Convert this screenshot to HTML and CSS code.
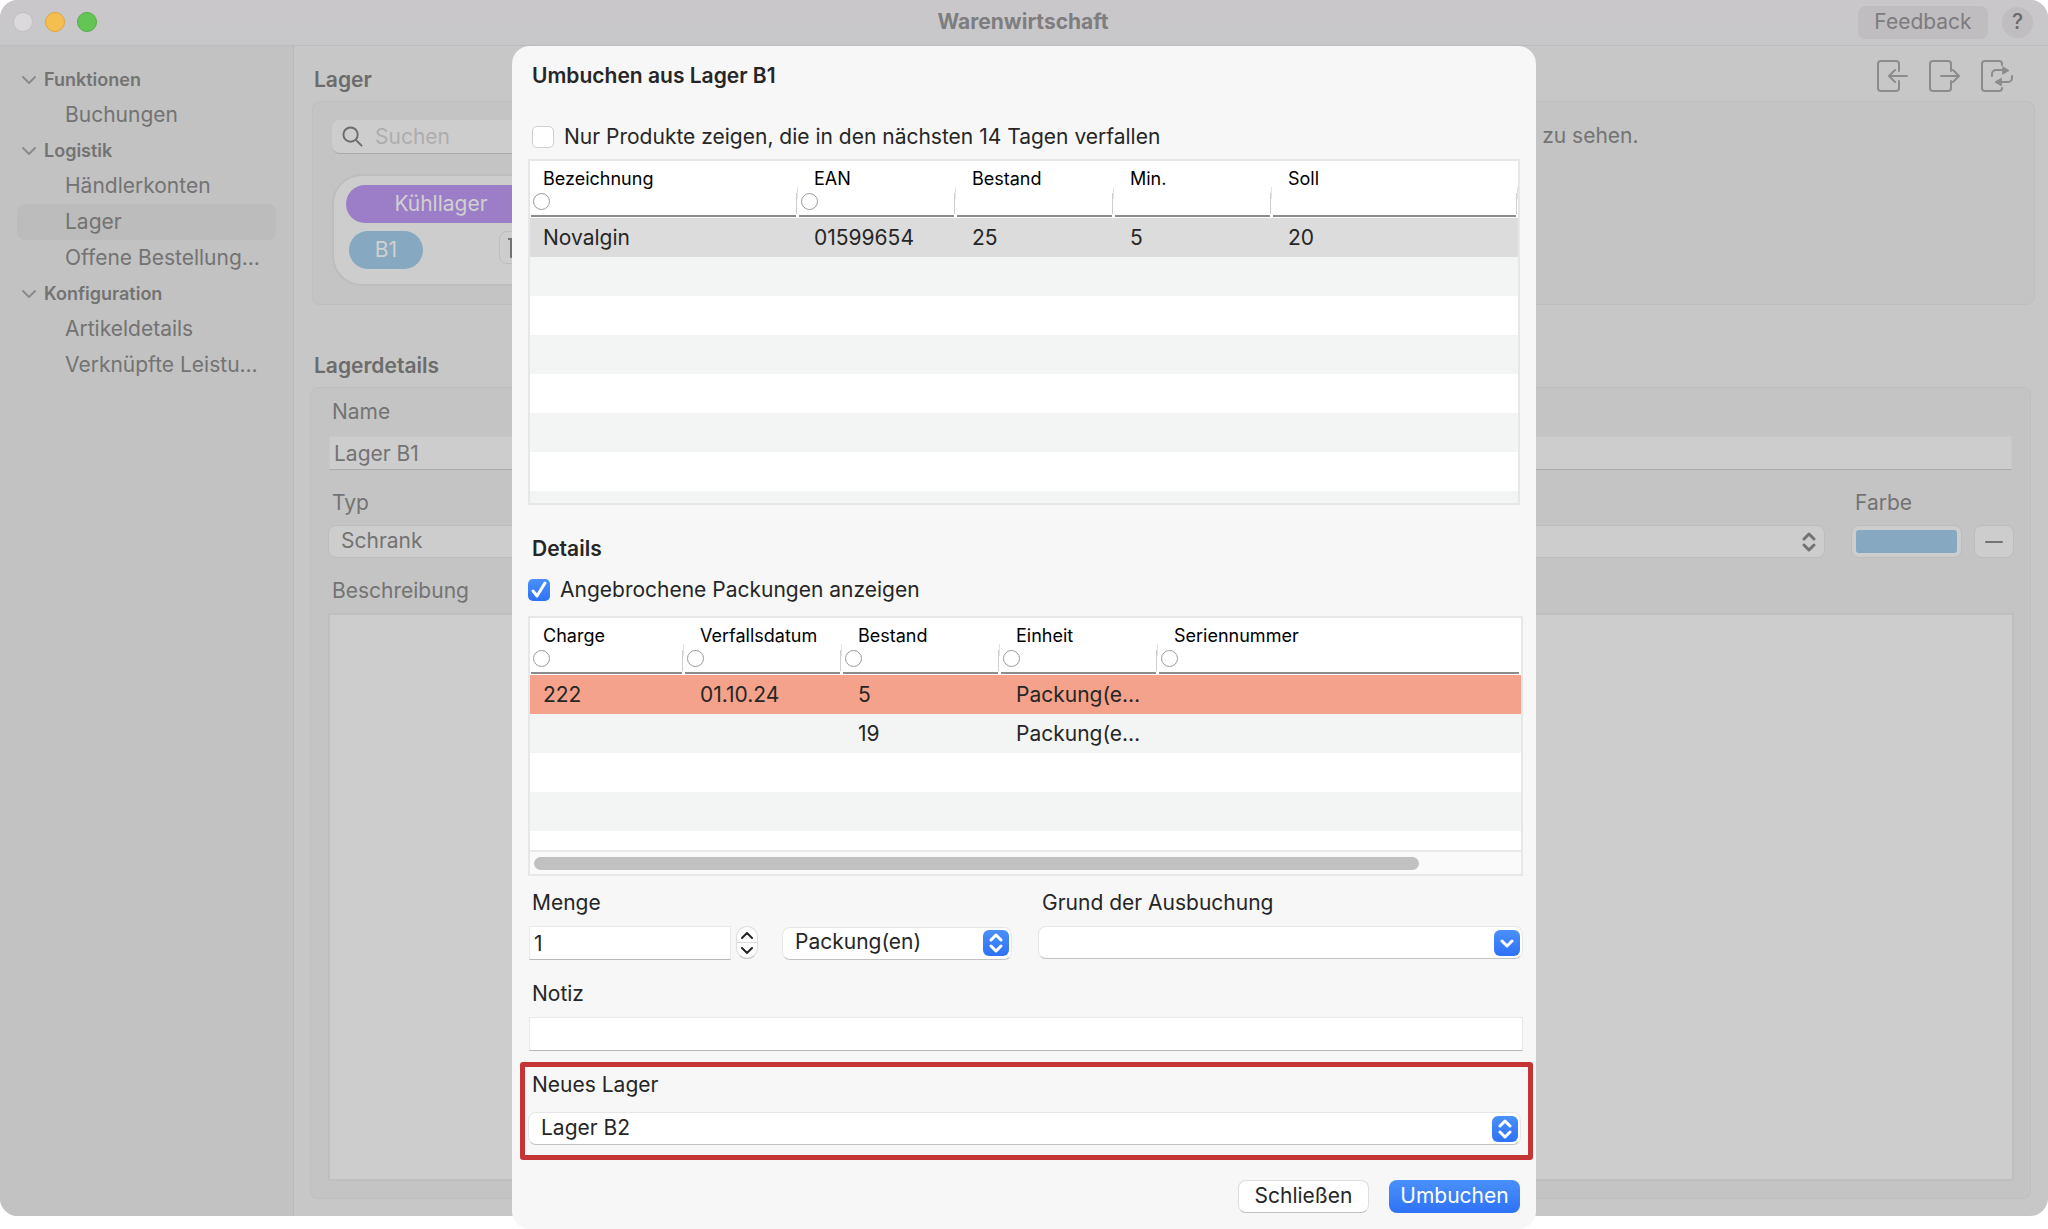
FILE: index.html
```html
<!DOCTYPE html>
<html lang="de">
<head>
<meta charset="utf-8">
<meta name="viewport" content="width=device-width, initial-scale=1">
<title>Warenwirtschaft</title>
<link rel="stylesheet" href="styles.css">
</head>
<body>
<svg class="sprite" aria-hidden="true">
  <symbol id="updown" viewBox="0 0 14 22"><path d="M2 8l5-5 5 5M2 14l5 5 5-5"/></symbol>
  <symbol id="down" viewBox="0 0 14 14"><path d="M2 5l5 5 5-5"/></symbol>
</svg>

<div class="window">
  <header class="titlebar">
    <div class="lights"><span class="light light-close"></span><span class="light light-min"></span><span class="light light-max"></span></div>
    <h1 class="window-title">Warenwirtschaft</h1>
    <div class="title-actions">
      <button class="feedback" type="button">Feedback</button>
      <button class="help" type="button" aria-label="Hilfe">?</button>
    </div>
  </header>

  <div class="body">
    <nav class="sidebar">
      <h2 class="group"><svg class="chevron" viewBox="0 0 14 14"><path d="M1 4l6 6 6-6"/></svg>Funktionen</h2>
      <a class="item" href="#">Buchungen</a>
      <h2 class="group"><svg class="chevron" viewBox="0 0 14 14"><path d="M1 4l6 6 6-6"/></svg>Logistik</h2>
      <a class="item" href="#">Händlerkonten</a>
      <a class="item item-active" href="#">Lager</a>
      <a class="item" href="#">Offene Bestellung…</a>
      <h2 class="group"><svg class="chevron" viewBox="0 0 14 14"><path d="M1 4l6 6 6-6"/></svg>Konfiguration</h2>
      <a class="item" href="#">Artikeldetails</a>
      <a class="item" href="#">Verknüpfte Leistu…</a>
    </nav>

    <main class="main">
      <div class="section-head">
        <h2 class="section-title">Lager</h2>
        <div class="tools">
          <button class="tool" type="button" aria-label="Einbuchen"><svg viewBox="0 0 32 32"><path d="M22 11V4a3 3 0 0 0-3-3H4a3 3 0 0 0-3 3v24a3 3 0 0 0 3 3h15a3 3 0 0 0 3-3v-7M30 16H13M18 10l-6 6 6 6"/></svg></button>
          <button class="tool" type="button" aria-label="Ausbuchen"><svg viewBox="0 0 32 32"><path d="M22 11V4a3 3 0 0 0-3-3H4a3 3 0 0 0-3 3v24a3 3 0 0 0 3 3h15a3 3 0 0 0 3-3v-7M12 16h17M24 10l6 6-6 6"/></svg></button>
          <button class="tool" type="button" aria-label="Umbuchen"><svg viewBox="0 0 32 32"><path d="M21 5V4a3 3 0 0 0-3-3H4a3 3 0 0 0-3 3v24a3 3 0 0 0 3 3h14a3 3 0 0 0 3-3M11 16v-2a4 4 0 0 1 4-4h8M31 16v2a4 4 0 0 1-4 4h-8"/><path class="solid" d="M22 7l6 3.500-6 3.500zM20 18.500l-6 3.500 6 3.500z"/></svg></button>
        </div>
      </div>
      <section class="panel panel-storage">
        <div class="storage-list">
          <label class="search">
            <svg class="search-icon" viewBox="0 0 22 22"><circle cx="9" cy="9" r="7.500"/><path d="M14.500 14.500l6 6"/></svg>
            <input class="search-input" type="search" placeholder="Suchen" aria-label="Suchen">
          </label>
          <div class="card">
            <button class="pill pill-purple" type="button">Kühllager</button>
            <div class="card-row">
              <button class="pill pill-blue" type="button">B1</button>
              <button class="mini" type="button" aria-label="Lager bearbeiten"><svg viewBox="0 0 14 20"><path d="M0 1h12v18H3V1"/></svg></button>
            </div>
          </div>
        </div>
        <p class="hint">e zu sehen.</p>
      </section>

      <h2 class="section-title section-title-second">Lagerdetails</h2>
      <form class="panel panel-details">
        <label class="label" for="name">Name</label>
        <input class="field" id="name" type="text" value="Lager B1">
        <div class="type-row">
          <div class="type-col">
            <label class="label" for="typ">Typ</label>
            <div class="select">
              <select id="typ"><option>Schrank</option></select>
              <svg class="caret"><use href="#updown"/></svg>
            </div>
          </div>
          <div class="color-col">
            <label class="label" for="farbe">Farbe</label>
            <div class="color-row">
              <input class="color" id="farbe" type="color" value="#86a8c1">
              <button class="minus" type="button" aria-label="Farbe entfernen"><svg viewBox="0 0 18 4"><path d="M1 2h16"/></svg></button>
            </div>
          </div>
        </div>
        <label class="label" for="beschreibung">Beschreibung</label>
        <textarea class="textarea" id="beschreibung"></textarea>
      </form>
    </main>
  </div>
</div>

<form class="dialog" role="dialog" aria-labelledby="dialog-title">
  <h2 class="dialog-title" id="dialog-title">Umbuchen aus Lager B1</h2>

  <label class="check"><input type="checkbox"><svg class="tick" viewBox="0 0 22 22"><path d="M5 12l4 5 8-13"/></svg>Nur Produkte zeigen, die in den nächsten 14 Tagen verfallen</label>
  <div class="grid grid-products">
    <table>
      <colgroup><col class="col-name"><col class="col"><col class="col"><col class="col"><col></colgroup>
      <thead><tr>
        <th><span class="head">Bezeichnung</span><span class="filter"><button type="button" aria-label="Filter"></button></span></th>
        <th><span class="head">EAN</span><span class="filter"><button type="button" aria-label="Filter"></button></span></th>
        <th><span class="head">Bestand</span><span class="filter"></span></th>
        <th><span class="head">Min.</span><span class="filter"></span></th>
        <th><span class="head">Soll</span><span class="filter"></span></th>
      </tr></thead>
      <tbody>
        <tr class="row-selected"><td>Novalgin</td><td>01599654</td><td>25</td><td>5</td><td>20</td></tr>
      </tbody>
    </table>
    <div class="filler filler-odd"></div>
  </div>

  <h3 class="dialog-title dialog-subtitle">Details</h3>
  <label class="check check-details"><input type="checkbox" checked><svg class="tick" viewBox="0 0 22 22"><path d="M5 12l4 5 8-13"/></svg>Angebrochene Packungen anzeigen</label>
  <div class="grid grid-packs">
    <table>
      <colgroup><col class="col-charge"><col class="col"><col class="col"><col class="col"><col></colgroup>
      <thead><tr>
        <th><span class="head">Charge</span><span class="filter"><button type="button" aria-label="Filter"></button></span></th>
        <th><span class="head">Verfallsdatum</span><span class="filter"><button type="button" aria-label="Filter"></button></span></th>
        <th><span class="head">Bestand</span><span class="filter"><button type="button" aria-label="Filter"></button></span></th>
        <th><span class="head">Einheit</span><span class="filter"><button type="button" aria-label="Filter"></button></span></th>
        <th class="open"><span class="head">Seriennummer</span><span class="filter"><button type="button" aria-label="Filter"></button></span></th>
      </tr></thead>
      <tbody>
        <tr class="row-expired"><td>222</td><td>01.10.24</td><td>5</td><td>Packung(e…</td><td></td></tr>
        <tr class="row-odd"><td></td><td></td><td>19</td><td>Packung(e…</td><td></td></tr>
      </tbody>
    </table>
    <div class="filler"></div>
    <div class="scrollbar"><div class="thumb"></div></div>
  </div>

  <div class="amount-row">
    <div class="amount">
      <label class="label" for="menge">Menge</label>
      <div class="amount-fields">
        <input class="field field-amount" id="menge" type="text" value="1">
        <div class="stepper">
          <button type="button" aria-label="Mehr"><svg viewBox="0 0 12 8"><path d="M1 7l5-5 5 5"/></svg></button>
          <button type="button" aria-label="Weniger"><svg viewBox="0 0 12 8"><path d="M1 1l5 5 5-5"/></svg></button>
        </div>
        <div class="select select-unit">
          <select aria-label="Einheit"><option>Packung(en)</option></select>
          <span class="knob"><svg class="knob-icon"><use href="#updown"/></svg></span>
        </div>
      </div>
    </div>
    <div class="reason">
      <label class="label" for="grund">Grund der Ausbuchung</label>
      <div class="select">
        <select id="grund"><option></option></select>
        <span class="knob"><svg class="knob-icon knob-icon-small"><use href="#down"/></svg></span>
      </div>
    </div>
  </div>

  <label class="label label-note" for="notiz">Notiz</label>
  <input class="field field-note" id="notiz" type="text">

  <div class="highlight">
    <label class="label" for="neues">Neues Lager</label>
    <div class="select">
      <select id="neues"><option>Lager B2</option></select>
      <span class="knob"><svg class="knob-icon"><use href="#updown"/></svg></span>
    </div>
  </div>

  <div class="actions">
    <button class="button" type="button">Schließen</button>
    <button class="button button-primary" type="submit">Umbuchen</button>
  </div>
</form>
</body>
</html>
```
FILE: styles.css
```css
*, *::before, *::after { box-sizing: border-box; }

body {
  margin: 0;
  min-height: 100vh;
  padding-bottom: 13px;
  display: flex;
  flex-direction: column;
  position: relative;
  background: #fff;
  font: 21px/26px Inter, "Liberation Sans", sans-serif;
  color: #262626;
}

h1, h2, h3, p { margin: 0; font-size: inherit; }
button, input, select, textarea { font: inherit; color: inherit; margin: 0; padding: 0; border: 0; background: none; border-radius: 0; }
svg { fill: none; stroke: currentColor; stroke-width: 2; stroke-linecap: round; stroke-linejoin: round; display: block; }
.sprite { position: absolute; width: 0; height: 0; }

/* Main window, dimmed behind the sheet */
.window {
  flex: 1;
  display: flex;
  flex-direction: column;
  border-radius: 18px;
  overflow: hidden;
  background: #c7c7c7;
  color: #737373;
}

.titlebar {
  display: grid;
  grid-template-columns: 1fr auto 1fr;
  align-items: center;
  height: 46px;
  padding: 0 15px 1px 13px;
  background: linear-gradient(#cac7ca, #c7c7c9);
  border-bottom: 1px solid #bdbdbd;
}
.lights { display: flex; gap: 12px; }
.light { width: 20px; height: 20px; border-radius: 50%; }
.light-close { background: #dcd9dd; border: 1px solid #c2bfc3; }
.light-min { background: #f5bf4f; border: 1px solid #dfa33b; }
.light-max { background: #62c554; border: 1px solid #52ad44; }
.window-title { font-weight: 700; color: #7e7d7f; }
.title-actions { display: flex; justify-content: flex-end; align-items: center; gap: 14px; color: #7d7b7e; }
.feedback { width: 130px; height: 33px; border-radius: 8px; background: #bfbdc0; }
.help { width: 31px; height: 31px; border-radius: 50%; background: #bfbdc0; font-weight: 500; color: #6b696c; }

.body { flex: 1; display: flex; }

.sidebar {
  flex: none;
  width: 294px;
  padding: 16px 17px;
  background: #c2c2c2;
  border-right: 1px solid #bababa;
}
.group { display: flex; align-items: center; gap: 8px; height: 35px; padding-left: 5px; font-size: 18px; font-weight: 600; }
.chevron { width: 14px; height: 14px; color: #8b8b8b; }
.item { display: block; height: 36px; padding-left: 48px; line-height: 36px; border-radius: 8px; color: inherit; text-decoration: none; white-space: nowrap; }
.item-active { background: #bcbcbc; }

.main { flex: 1; min-width: 0; display: flex; flex-direction: column; padding: 0 16px 17px; }
.section-head { display: flex; align-items: center; justify-content: space-between; height: 55px; padding: 12px 19px 0 0; }
.section-title { padding-left: 4px; font-weight: 600; color: #6c6c6c; }
.section-title-second { margin-top: 48px; margin-bottom: 8px; }
.tools { display: flex; gap: 20px; margin-bottom: 7px; color: #8c8c8c; }
.tool { width: 32px; height: 32px; }
.tool svg { width: 32px; height: 32px; }
.solid { fill: currentColor; stroke-width: 1; }

.panel { background: #c4c4c4; border: 1px solid #bfbfbf; border-radius: 8px; }
.panel-storage { display: flex; justify-content: space-between; height: 204px; margin-left: 2px; margin-right: -3px; padding: 18px 19px; }
.storage-list { width: 240px; }
.search { display: flex; align-items: center; gap: 12px; height: 34px; padding-left: 10px; border-radius: 8px; background: #cdcdcd; border-bottom: 1px solid #a9a9a9; }
.search-icon { flex: none; width: 21px; height: 21px; color: #6c6c6c; }
.search-input { width: 150px; outline: 0; }
.search-input::placeholder { color: #adadad; opacity: 1; }
.card { width: 218px; height: 112px; margin-top: 20px; padding: 9px 12px; border: 2px solid #bdbdbd; border-radius: 30px; background: #cdcdcd; }
.card-row { display: flex; justify-content: space-between; padding: 8px 4px 0 3px; }
.pill { display: block; height: 38px; border-radius: 19px; color: #d0d0d0; }
.pill-purple { width: 100%; background: #9c7dc8; }
.pill-blue { width: 74px; background: #86a8c1; }
.mini { width: 33px; height: 33px; padding-left: 8px; border-radius: 8px; background: #cdcdcd; border: 1px solid #bfbfbf; }
.mini svg { width: 14px; height: 20px; }
.hint { width: 491px; padding-top: 3px; }

.panel-details { flex: 1; display: flex; flex-direction: column; margin-right: 1px; padding: 11px 16px 17px 17px; }
.label { display: block; padding-left: 4px; }
.field { height: 34px; padding: 0 4px; border: 1px solid #e9e9e9; border-bottom-color: #b8b8b8; background: #fff; }
.panel-details .field { margin: 11px 2px 0 1px; background: #cdcdcd; border-color: #c8c8c8; border-bottom-color: #aaa; }
.type-row { display: flex; gap: 26px; margin: 20px 0 20px; }
.type-col { flex: 1; }
.type-col .select, .color-row { margin-top: 9px; }
.color-row { display: flex; gap: 12px; }
.color { width: 111px; height: 33px; padding: 4px; border-radius: 8px; background: #cdcdcd; border: 1px solid #bdbdbd; }
.color::-webkit-color-swatch-wrapper { padding: 0; }
.color::-webkit-color-swatch { border: 0; border-radius: 3px; }
.minus { display: grid; place-items: center; width: 40px; height: 33px; border-radius: 8px; background: #cdcdcd; border: 1px solid #bdbdbd; }
.minus svg { width: 18px; height: 4px; }
.textarea { flex: 1; margin-top: 9px; border: 2px solid #bfbfbf; background: #cdcdcd; resize: none; }

/* Drop-downs: the icon shares the grid cell with the native control */
.select { display: grid; align-items: center; }
.select > * { grid-area: 1 / 1; }
.select select { width: 100%; height: 33px; padding: 0 12px 2px; appearance: none; border: 1px solid #e6e6e6; border-bottom-color: #c2c2c2; border-radius: 8px; background: #fff; }
.panel-details .select select { background: #cdcdcd; border-color: #bdbdbd; }
.caret { justify-self: end; width: 14px; height: 22px; margin-right: 9px; stroke-width: 3; pointer-events: none; }
.knob { justify-self: end; display: grid; place-items: center; width: 26px; height: 26px; margin-right: 3px; border-radius: 6px; background: linear-gradient(#4a90fa, #2e72f6); color: #fff; pointer-events: none; }
.knob-icon { width: 14px; height: 22px; stroke-width: 3; }
.knob-icon-small { height: 14px; }

/* Sheet that lies over the window */
.dialog {
  position: absolute;
  top: 46px;
  left: 25%;
  width: 50%;
  display: flex;
  flex-direction: column;
  padding: 17px 13px 16px 16px;
  border-radius: 18px;
  background: #f7f7f7;
}
.dialog-title { padding-left: 4px; font-weight: 600; }
.dialog-subtitle { margin: 31px 0 15px; }
.check { display: flex; align-items: center; gap: 10px; margin: 35px 0 9px; padding-left: 4px; }
.check input { appearance: none; width: 22px; height: 22px; border: 1px solid #cfcfcf; border-radius: 5px; background: #fff; }
.check input:checked { border: 0; background: linear-gradient(#4a90fa, #2e72f6); }
.tick { width: 22px; height: 22px; margin-left: -32px; stroke-width: 3; color: #fff; }
.check-details { margin: 0 0 13px; padding-left: 0; }

.grid { display: flex; flex-direction: column; border: 2px solid #e6e7e7; background: #fff; }
.grid-products { height: 346px; margin-right: 3px; }
.grid-packs { height: 260px; }
table { width: 100%; table-layout: fixed; border-collapse: collapse; }
.col-name { width: 268px; }
.col-charge { width: 154px; }
.col { width: 158px; }
th { position: relative; height: 57px; padding: 0; text-align: left; vertical-align: top; font-size: 18px; font-weight: 400; color: #000; }
th::before, th::after { content: ""; position: absolute; right: 0; width: 1px; background: #e2e2e2; }
th::before { top: 26px; height: 12px; }
th::after { top: 32px; right: 1px; height: 21px; background: #cfcfcf; }
.open::before, .open::after { display: none; }
.head { display: block; padding: 6px 0 0 16px; line-height: 24px; }
.filter { display: block; height: 26px; margin: 0 2px 1px 1px; padding: 2px 0 0 2px; border-bottom: 2px solid #8c8c8c; }
.filter button { display: block; width: 17px; height: 17px; border: 1px solid #9a9a9a; border-radius: 50%; background: #fff; }
td { height: 39px; padding: 0 0 0 16px; white-space: nowrap; }
th:first-child .head, td:first-child { padding-left: 13px; }
.row-selected { background: #dcdcdc; }
.row-expired { background: #f4a28b; }
.row-odd { background: #f3f5f4; }
.filler { flex: 1; background: repeating-linear-gradient(#fff 0 39px, #f3f5f4 39px 78px); }
.filler-odd { background: repeating-linear-gradient(#f3f5f4 0 39px, #fff 39px 78px); }
.scrollbar { height: 24px; padding: 5px 4px; border-top: 2px solid #e8e8e8; background: #fafafa; }
.thumb { width: 90%; height: 13px; border-radius: 7px; background: #c1c1c1; }

.amount-row { display: flex; gap: 26px; margin-top: 14px; }
.amount-fields { display: flex; margin: 10px 0 0 1px; }
.reason { flex: 1; }
.reason .select { margin-top: 10px; }
.field-amount { width: 202px; }
.stepper { width: 22px; height: 33px; margin: 0 24px 0 5px; display: flex; flex-direction: column; border: 1px solid #e0e0e0; border-bottom-color: #c4c4c4; border-radius: 11px; background: #fff; }
.stepper button { flex: 1; display: grid; place-items: center; }
.stepper button + button { border-top: 1px solid #dcdcdc; }
.stepper svg { width: 12px; height: 8px; }
.select-unit { width: 230px; }
.label-note { margin-top: 21px; }
.field-note { margin: 10px 0 0 1px; }
.highlight { margin: 11px -10px 0 -8px; padding: 5px 7px 10px 3px; border: 5px solid #c53536; border-radius: 3px; }
.highlight .select { margin-top: 14px; }
.actions { display: flex; justify-content: flex-end; gap: 20px; margin-top: 20px; padding-right: 3px; }
.button { width: 131px; height: 33px; padding-bottom: 2px; border: 1px solid #dedede; border-bottom-color: #c0c0c0; border-radius: 8px; background: #fff; }
.button-primary { border: 0; background: linear-gradient(#4a90fa, #2e72f6); color: #fff; }
```
